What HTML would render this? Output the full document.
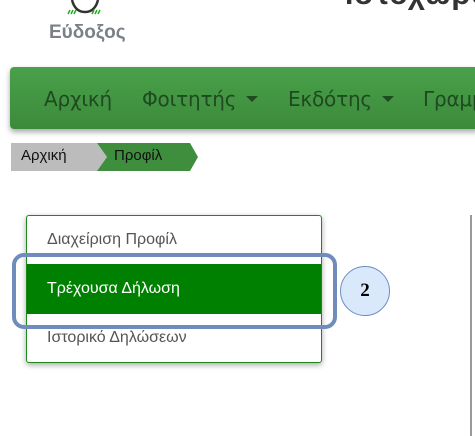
<!DOCTYPE html>
<html><head><meta charset="utf-8"><style>
body{margin:0;width:475px;height:436px;overflow:hidden;background:#fff;font-family:"Liberation Sans","DejaVu Sans",sans-serif;position:relative}
.a{position:absolute;white-space:nowrap}
.n{position:absolute;top:87px;font-size:20px;color:#1f4a1f;font-family:'DejaVu Sans',sans-serif;letter-spacing:-0.2px;white-space:nowrap}
.c{display:inline-block;border:6px solid transparent;border-top:6px solid #1f4a1f;margin:0 0 -2px 10px}
</style></head><body>
<svg class="a" style="left:60px;top:0" width="60" height="16"><path d="M7 0 Q10 12 20 12 Q30 12 33 0" fill="none" stroke="#333" stroke-width="2.5" transform="translate(5,0)"/>
<path d="M8 14 l2 -4 M11 14 l2 -4 M14 14 l2 -4 M32 14 l2 -4 M35 14 l2 -4 M38 14 l2 -4" stroke="#2a2" stroke-width="1.5"/></svg>
<div class="a" style="left:49px;top:22px;font-size:19px;font-weight:bold;color:#7b7f86">Εύδοξος</div>
<div class="a" style="left:345px;top:-22px;font-size:30px;font-weight:bold;color:#333;letter-spacing:1px">Ιστοχώρος</div>
<div class="a" style="left:10px;top:67px;width:470px;height:62px;border-radius:4px;background:linear-gradient(#4aa14a,#3b8a3b);box-shadow:0 3px 6px rgba(0,0,0,.35)"></div>
<div class="n" style="left:44px">Αρχική</div>
<div class="n" style="left:142px">Φοιτητής<span class="c"></span></div>
<div class="n" style="left:288px">Εκδότης<span class="c"></span></div>
<div class="n" style="left:423px">Γραμμ</div>
<svg class="a" style="left:11px;top:143px" width="190" height="28"><polygon points="0,0 86,0 96,14 86,28 0,28" fill="#bcbcbc"/><polygon points="86,0 179,0 187,14 179,28 86,28 96,14" fill="#3e8e3e"/></svg>
<div class="a" style="left:21px;top:147px;font-size:15px;color:#111">Αρχική</div>
<div class="a" style="left:114px;top:147px;font-size:15px;color:#111">Προφίλ</div>
<div class="a" style="left:470px;top:215px;width:2px;height:221px;background:#999"></div>
<div class="a" style="left:26px;top:215px;width:294px;height:146px;border:1px solid #1b8a1b;border-radius:3px;box-shadow:0 2px 6px rgba(0,0,0,.35);background:#fff"></div>
<div class="a" style="left:27px;top:264px;width:294px;height:50px;background:#008000"></div>
<div class="a" style="left:47px;top:231px;font-size:16px;color:#555">Διαχείριση Προφίλ</div>
<div class="a" style="left:47px;top:280px;font-size:16px;color:#fff">Τρέχουσα Δήλωση</div>
<div class="a" style="left:47px;top:329px;font-size:16px;color:#555">Ιστορικό Δηλώσεων</div>
<div class="a" style="left:12px;top:253px;width:317px;height:68px;border:4px solid #6f8cbc;border-radius:12px"></div>
<div class="a" style="left:340px;top:266px;width:48px;height:48px;border:1px solid #6c8ebf;border-radius:50%;background:#dae8fc;text-align:center;line-height:48px;font-family:'Liberation Serif',serif;font-weight:bold;font-size:19px;color:#000">2</div>
</body></html>
